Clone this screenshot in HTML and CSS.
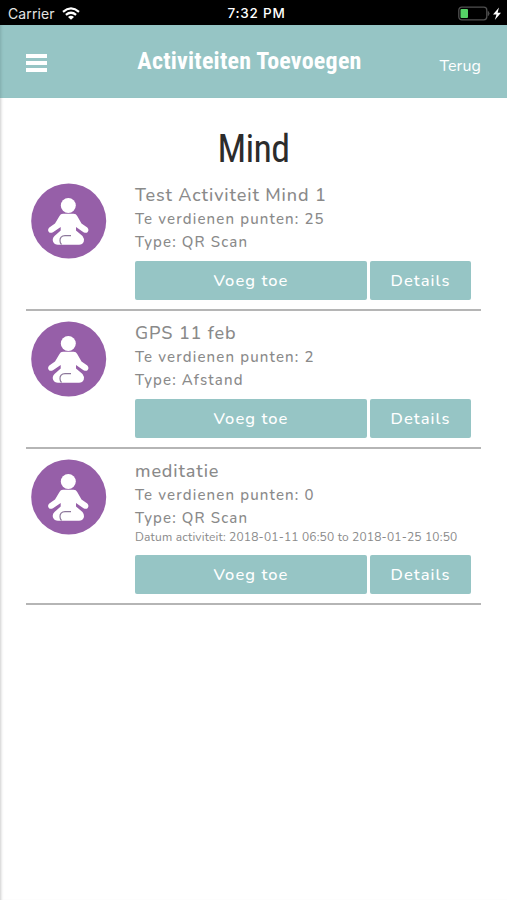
FILE: index.html
```html
<!DOCTYPE html>
<html lang="nl">
<head>
<meta charset="utf-8">
<title>Activiteiten Toevoegen</title>
<link rel="stylesheet" href="styles.css">
</head>
<body>
<svg class="defs" aria-hidden="true">
  <symbol id="mind" viewBox="0 0 76 76">
    <circle cx="37.700" cy="38" r="37.500" fill="#965fa8"/>
    <circle cx="37.300" cy="22.500" r="7.500" fill="#fff"/>
    <path fill="#fff" d="M32 30.800H42.600Q45.200 30.800 46.200 33L50.500 40.500L56.300 44.500Q58.500 47 56.500 49.200Q55 50.500 52.500 49.200L45 44V47.500L51.500 53Q53.500 55.500 52.800 58.500Q51.500 61.700 48 61.700H27Q23.500 61.700 22 58.500Q21 55.500 23.500 53L29.700 47.500V44L22 49.200Q19.600 50.500 18 49.200Q16 47 18.300 44.500L24 40.500L28.500 33Q29.500 30.800 32 30.800Z"/>
    <path fill="none" stroke="#8d789b" stroke-width="1.200" d="M40 52.700H34C30.500 52.700 28.800 55 29 57.800Q29 60 30.500 61.500"/>
  </symbol>
</svg>
<div class="status">
  <div class="carrier"><span>Carrier</span>
    <svg class="wifi" viewBox="0 0 18 13"><g fill="none" stroke="#fff" stroke-width="2.200"><path d="M1 4.800Q9-1.900 17 4.800"/><path d="M3.900 7.900Q9 3.600 14.100 7.900"/></g><path fill="#fff" d="M6 10Q9 7.700 12 10L9 12.800Z"/></svg>
  </div>
  <div class="time">7:32 PM</div>
  <div class="power">
    <svg width="46" height="16" viewBox="0 0 46 16"><rect x=".8" y="1.200" width="28" height="12.600" rx="3" fill="none" stroke="#505050" stroke-width="1.300"/><path d="M30.200 5.500Q32 7.500 30.200 9.500Z" fill="#505050" stroke="#505050"/><rect x="2.500" y="3" width="7.500" height="9" rx="1" fill="#55d366"/><path d="M41 1.500L35 8.500H38.500L36.800 14L43 6.700H39.600Z" fill="#fff"/></svg>
  </div>
</div>
<header class="bar">
  <div class="menu"><i></i><i></i><i></i></div>
  <h1>Activiteiten Toevoegen</h1>
  <a class="back">Terug</a>
</header>
<main>
  <h2>Mind</h2>
  <section class="item">
    <svg class="badge"><use href="#mind"/></svg>
    <div class="info">
      <h3>Test Activiteit Mind 1</h3>
      <p>Te verdienen punten: 25</p>
      <p>Type: QR Scan</p>
      <div class="actions"><a class="btn">Voeg toe</a><a class="btn">Details</a></div>
    </div>
  </section>
  <section class="item">
    <svg class="badge"><use href="#mind"/></svg>
    <div class="info">
      <h3>GPS 11 feb</h3>
      <p>Te verdienen punten: 2</p>
      <p>Type: Afstand</p>
      <div class="actions"><a class="btn">Voeg toe</a><a class="btn">Details</a></div>
    </div>
  </section>
  <section class="item">
    <svg class="badge"><use href="#mind"/></svg>
    <div class="info">
      <h3>meditatie</h3>
      <p>Te verdienen punten: 0</p>
      <p>Type: QR Scan</p>
      <p class="date">Datum activiteit: 2018-01-11 06:50 to 2018-01-25 10:50</p>
      <div class="actions"><a class="btn">Voeg toe</a><a class="btn">Details</a></div>
    </div>
  </section>
</main>
</body>
</html>
```
FILE: styles.css
```css
* { box-sizing: border-box; margin: 0; padding: 0; }
body { background: #fff; font-family: Muli, Nunito, Lato, sans-serif; color: #8a8a8a; min-height: 900px; box-shadow: inset 3px 0 3px -2px #ccc; }
.defs { display: none; }
.status { height: 25px; background: #000; color: #fff; display: grid; grid-template-columns: 1fr auto 1fr; align-items: center; font: 14px/25px Inter, sans-serif; padding: 1px 3px 0 8px; }
.carrier { display: flex; align-items: center; gap: 7px; color: #e4e4e4; letter-spacing: .1px; }
.wifi { width: 18px; height: 13px; }
.time { font-weight: 500; font-size: 13.500px; letter-spacing: .75px; padding-left: 1px; }
.power { display: flex; justify-content: flex-end; }
.bar { height: 73px; background: #96c5c5; color: #fff; display: grid; grid-template-columns: 70px 1fr 70px; padding: 0 26px; box-shadow: inset 3px 0 3px -2px #7faaaa; }
.menu { padding-top: 29px; display: flex; flex-direction: column; gap: 3px; }
.menu i { width: 21px; height: 4px; background: #fff; }
h1 { font: 700 24px/30px "Roboto Condensed", Roboto, sans-serif; font-stretch: 75%; letter-spacing: .23px; text-align: center; padding-top: 21px; white-space: nowrap; justify-self: center; padding-right: 8px; }
.back { font-size: 16px; line-height: 20px; padding-top: 31px; text-align: right; letter-spacing: .1px; }
main { padding: 0 26px; }
h2 { font: 400 38px/50px "Roboto Condensed", Roboto, sans-serif; font-stretch: 75%; letter-spacing: -.7px; color: #2c2c2c; text-align: center; padding-top: 26px; height: 75px; }
.item { display: grid; grid-template-columns: 109px 336px; padding: 10px 0 9px; border-bottom: 2px solid #b5b5b5; }
.badge { width: 76px; height: 76px; margin-left: 5px; }
.item h3 { font-weight: 500; font-size: 18px; line-height: 24px; letter-spacing: .88px; }
.item p { font-weight: 500; font-size: 15px; line-height: 22px; letter-spacing: 1.140px; white-space: nowrap; }
.item p:nth-of-type(1) { line-height: 24px; }
.item .date { font-weight: 400; font-size: 12px; line-height: 16px; padding-bottom: 2px; letter-spacing: .18px; }
.actions { display: grid; grid-template-columns: 232px 101px; gap: 3px; margin-top: 8px; }
.btn { height: 39px; border-radius: 2px; background: #96c5c5; color: #fff; font-size: 16.500px; font-weight: 500; letter-spacing: 1.050px; line-height: 40px; text-align: center; }
```
